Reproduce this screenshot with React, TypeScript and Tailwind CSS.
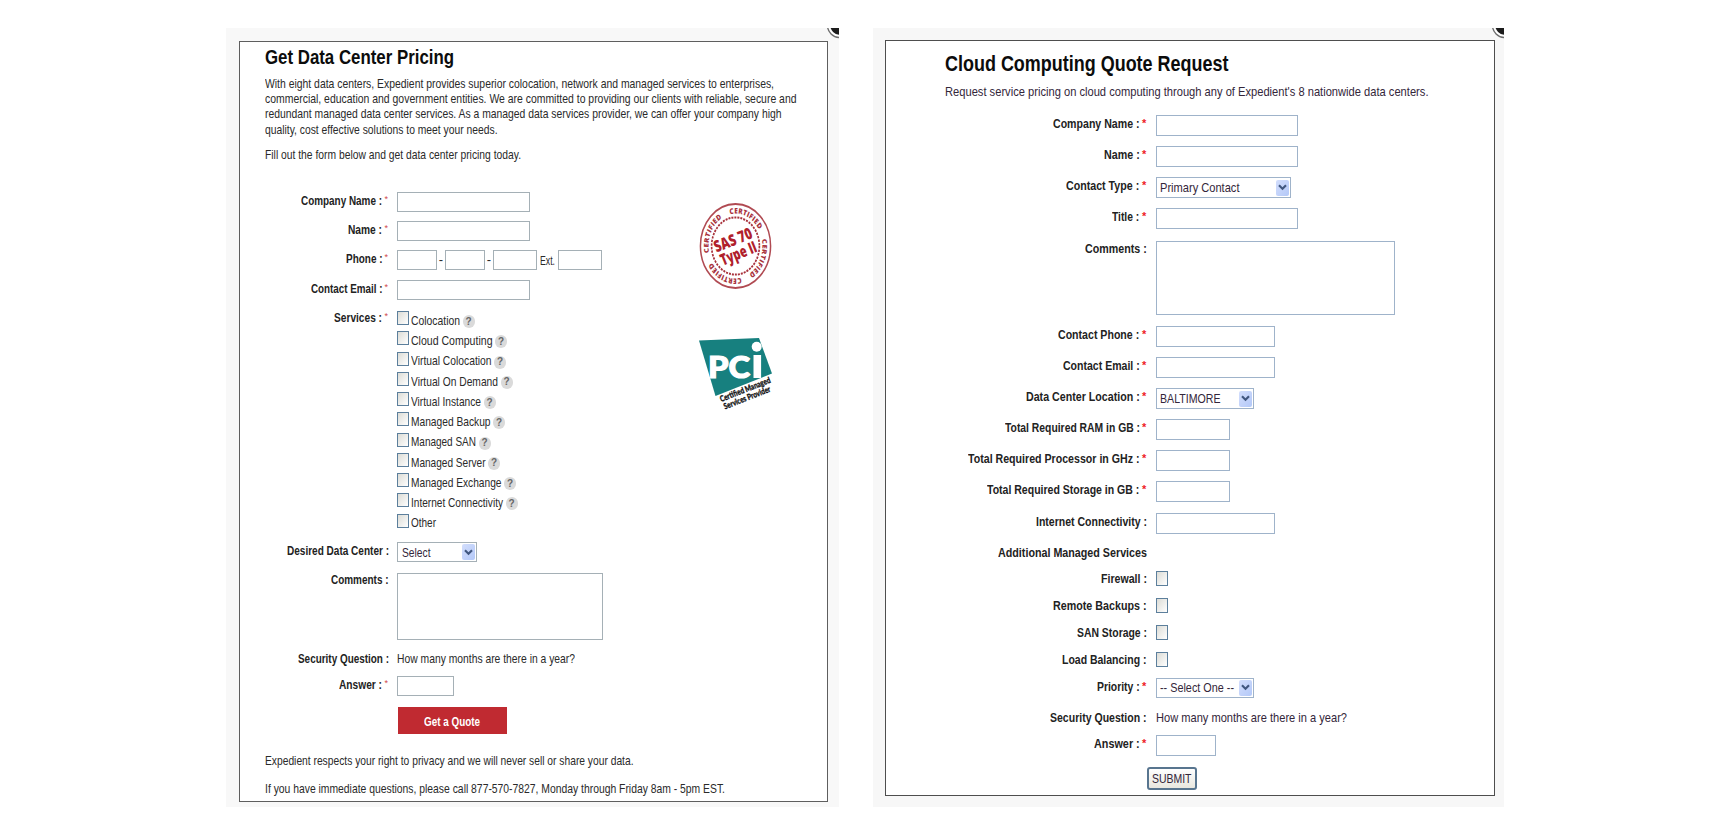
import { useLayoutEffect, useRef, type ReactNode } from "react";

/** One line of text, condensed or widened horizontally to an exact width. */
function Fit({ w, children, className = "" }: { w: number; children: ReactNode; className?: string }) {
  const ref = useRef<HTMLSpanElement>(null);
  useLayoutEffect(() => {
    const el = ref.current;
    if (!el) return;
    el.style.transform = "none";
    const natural = el.getBoundingClientRect().width;
    el.style.transform = `scaleX(${w / natural})`;
  }, [w, children]);
  return (
    <span className={`block shrink-0 whitespace-nowrap ${className}`} style={{ width: w }}>
      <span ref={ref} className="inline-block origin-left align-top">
        {children}
      </span>
    </span>
  );
}

type Theme = "left" | "right";

function Label({
  text,
  w,
  required,
  lowered = required,
  theme,
}: {
  text: string;
  w: number;
  required?: boolean;
  lowered?: boolean;
  theme: Theme;
}) {
  const left = theme === "left";
  return (
    <div
      className={`flex shrink-0 justify-end font-bold text-[#222] ${
        left ? "mr-[8.5px] w-[123.5px]" : "mr-[9.2px] w-[260.5px] pt-px"
      } ${left && lowered ? "pt-px" : ""}`}
    >
      <Fit w={w}>{text}</Fit>
      {required &&
        (left ? (
          <span className="w-[6.5px] pl-[2.5px] text-[9px] leading-[12px] font-normal text-[#d0474c]">*</span>
        ) : (
          <span className="w-[7px] pl-[2.5px] text-[11px] leading-[15px] text-[#ee1c25]">*</span>
        ))}
    </div>
  );
}

function Field({ className, theme }: { className: string; theme: Theme }) {
  return (
    <div
      className={`shrink-0 border bg-white ${theme === "left" ? "border-[#a5b0b6]" : "border-[#9fb3ca]"} ${className}`}
    />
  );
}

function Select({ text, w, className, theme }: { text: string; w: number; className: string; theme: Theme }) {
  return (
    <div
      className={`flex shrink-0 items-center justify-between border bg-white pr-px pl-[3.5px] text-[#33263a] ${
        theme === "left" ? "border-[#a5b0b6]" : "border-[#9fb3ca]"
      } ${className}`}
    >
      <Fit w={w} className="pt-px">
        {text}
      </Fit>
      <span className="flex h-[16px] w-[13px] items-center justify-center rounded-[2px] bg-linear-to-br from-[#d3defc] to-[#b3c8f8]">
        <svg width="9" height="7" viewBox="0 0 9 7" fill="none">
          <path d="M1 1.2 L4.5 4.8 L8 1.2" stroke="#41577f" strokeWidth="2.1" />
        </svg>
      </span>
    </div>
  );
}

function Checkbox({ className }: { className: string }) {
  return (
    <span
      className={`block w-[12px] shrink-0 border border-[#5c7f9c] bg-linear-to-br from-[#dcdcd6] to-white ${className}`}
    />
  );
}

function CloseCorner() {
  return (
    <svg className="absolute top-0 right-0" width="12" height="11" viewBox="0 0 12 11">
      <circle cx="13" cy="-3" r="12.6" fill="#fff" stroke="#6e6e6e" strokeWidth="1.4" />
      <circle cx="13" cy="-3" r="9.8" fill="#1c1c1c" />
    </svg>
  );
}

function Seal() {
  return (
    <svg width="74" height="88" viewBox="-37.5 -44 74 88" className="block">
      <g transform="scale(.835 1)" fill="#a8323c">
        <circle r="42" fill="none" stroke="#b04a52" strokeWidth="1.8" />
        <circle r="28.6" fill="none" stroke="#a8323c" strokeWidth="2" strokeDasharray="2.4 1.2" />
        <defs>
          <path id="ring" d="M0 -32.4 A32.4 32.4 0 1 1 -0.01 -32.4" />
        </defs>
        {[-12, 78, 168, 258].map((a) => (
          <text
            key={a}
            transform={`rotate(${a})`}
            fontFamily="Open Sans, sans-serif"
            fontWeight="800"
            fontSize="7.7"
            letterSpacing=".25"
          >
            <textPath href="#ring">CERTIFIED</textPath>
          </text>
        ))}
      </g>
      <g
        transform="rotate(-22)"
        fill="#b0202c"
        fontFamily="Open Sans, sans-serif"
        fontWeight="800"
        fontSize="16"
        textAnchor="middle"
      >
        <text x="0" y="-1" textLength="40" lengthAdjust="spacingAndGlyphs">
          SAS 70
        </text>
        <text x="0" y="13.5" textLength="38" lengthAdjust="spacingAndGlyphs">
          Type II
        </text>
      </g>
    </svg>
  );
}

function PciLogo() {
  return (
    <svg width="78" height="84" viewBox="0 0 78 84" className="block overflow-visible">
      <path d="M1 3.5 L61 1 L74 36.5 L17.5 59 Z" fill="#17807f" />
      <g fill="#fff" fontFamily="Lato, sans-serif" fontWeight="900">
        <text x="10" y="41" fontSize="31" textLength="42" lengthAdjust="spacingAndGlyphs" stroke="#fff" strokeWidth="1.2">
          PC
        </text>
      </g>
      <rect x="55.5" y="18" width="7.6" height="23" fill="#fff" />
      <circle cx="58.7" cy="9.7" r="5" fill="#fff" />
      <g fontFamily="Lato, sans-serif" fontWeight="900" fontSize="8.4" fill="#111" stroke="#111" strokeWidth=".3">
        <text transform="translate(23.3 65) rotate(-21.5)" textLength="53.5" lengthAdjust="spacingAndGlyphs">
          Certified Managed
        </text>
        <text transform="translate(27 72.5) rotate(-21.5)" textLength="49.5" lengthAdjust="spacingAndGlyphs">
          Services Provider
        </text>
      </g>
    </svg>
  );
}

const services: { name: string; w: number; help: boolean }[] = [
  { name: "Colocation", w: 49, help: true },
  { name: "Cloud Computing", w: 81.5, help: true },
  { name: "Virtual Colocation", w: 80.5, help: true },
  { name: "Virtual On Demand", w: 87, help: true },
  { name: "Virtual Instance", w: 70, help: true },
  { name: "Managed Backup", w: 79.5, help: true },
  { name: "Managed SAN", w: 65, help: true },
  { name: "Managed Server", w: 74.5, help: true },
  { name: "Managed Exchange", w: 90.5, help: true },
  { name: "Internet Connectivity", w: 92, help: true },
  { name: "Other", w: 25, help: false },
];

function PricingForm() {
  return (
    <section className="relative h-[779px] w-[613px] bg-[#f8f8f8] pt-[13px] pl-[13px]">
      <CloseCorner />
      <div className="h-[761px] w-[589px] border border-[#5e5e5e] bg-white pl-[25px] text-[13px] leading-[15px] text-[#2a2a2a]">
        <h1 className="pt-[4px] text-[20px] leading-[22px] font-bold text-[#0c0c0c]">
          <Fit w={189}>Get Data Center Pricing</Fit>
        </h1>
        <div className="pt-[7.6px] leading-[15.33px]">
          <Fit w={509}>With eight data centers, Expedient provides superior colocation, network and managed services to enterprises,</Fit>
          <Fit w={531.5}>commercial, education and government entities. We are committed to providing our clients with reliable, secure and</Fit>
          <Fit w={516.5}>redundant managed data center services. As a managed data services provider, we can offer your company high</Fit>
          <Fit w={232.5}>quality, cost effective solutions to meet your needs.</Fit>
        </div>
        <div className="pt-[10.1px]">
          <Fit w={256}>Fill out the form below and get data center pricing today.</Fit>
        </div>

        <div className="flex pt-[29.5px]">
          <div className="w-[433px]">
            <div className="flex h-[29.4px]">
              <Label theme="left" text="Company Name :" w={81} required />
              <Field theme="left" className="h-[20px] w-[133px]" />
            </div>
            <div className="flex h-[29.4px]">
              <Label theme="left" text="Name :" w={34} required />
              <Field theme="left" className="h-[20px] w-[133px]" />
            </div>
            <div className="flex h-[29.4px]">
              <Label theme="left" text="Phone :" w={36.5} required />
              <Field theme="left" className="h-[20px] w-[40px]" />
              <span className="w-[8px] pt-[2px] text-center">-</span>
              <Field theme="left" className="h-[20px] w-[40px]" />
              <span className="w-[8px] pt-[2px] text-center">-</span>
              <Field theme="left" className="h-[20px] w-[44px]" />
              <Fit w={15} className="mr-[3px] ml-[3px] pt-[3px]">
                Ext.
              </Fit>
              <Field theme="left" className="h-[20px] w-[44px]" />
            </div>
            <div className="flex h-[29.4px]">
              <Label theme="left" text="Contact Email :" w={71.5} required />
              <Field theme="left" className="h-[20px] w-[133px]" />
            </div>
            <div className="flex h-[233.4px]">
              <Label theme="left" text="Services :" w={48} required />
              <div className="pt-[2px]">
                {services.map((s) => (
                  <div key={s.name} className="flex h-[20.27px]">
                    <Checkbox className="mr-[1.5px] h-[14px]" />
                    <Fit w={s.w} className="pt-[1.7px]">
                      {s.name}
                    </Fit>
                    {s.help && (
                      <span className="mt-[4px] ml-[3px] flex h-[13px] w-[12px] items-center justify-center rounded-full bg-[#dadada] text-[10px] leading-[12px] font-bold text-[#666]">
                        ?
                      </span>
                    )}
                  </div>
                ))}
              </div>
            </div>
            <div className="flex h-[30px]">
              <Label theme="left" text="Desired Data Center :" w={102} lowered />
              <Select theme="left" text="Select" w={28.5} className="h-[20px] w-[80px]" />
            </div>
            <div className="flex h-[78.5px]">
              <Label theme="left" text="Comments :" w={57.5} />
              <Field theme="left" className="mt-px h-[67px] w-[206px]" />
            </div>
            <div className="flex h-[25.5px]">
              <Label theme="left" text="Security Question :" w={91} />
              <Fit w={178}>How many months are there in a year?</Fit>
            </div>
            <div className="flex h-[30.5px]">
              <Label theme="left" text="Answer :" w={43} required />
              <Field theme="left" className="h-[20px] w-[57px]" />
            </div>
            <button className="ml-[132.5px] flex h-[27.5px] w-[109.5px] items-center justify-center bg-[#c02a31] pt-px font-bold text-white">
              <Fit w={56}>Get a Quote</Fit>
            </button>
          </div>
          <div className="flex w-[78px] flex-col gap-[47px] pt-[10.5px]">
            <Seal />
            <PciLogo />
          </div>
        </div>

        <div className="pt-[18.4px]">
          <Fit w={368.5}>Expedient respects your right to privacy and we will never sell or share your data.</Fit>
        </div>
        <div className="pt-[13px]">
          <Fit w={460}>If you have immediate questions, please call 877-570-7827, Monday through Friday 8am - 5pm EST.</Fit>
        </div>
      </div>
    </section>
  );
}

function QuoteForm() {
  return (
    <section className="relative h-[779px] w-[631px] bg-[#f7f7f7] pt-[12px] pl-[12px]">
      <CloseCorner />
      <div className="h-[756px] w-[610px] border border-[#4e4e4e] bg-white text-[13.5px] leading-[16px] text-[#33263a]">
        <h1 className="pt-[11px] pl-[59px] text-[22px] leading-[24px] font-bold text-[#0c0c0c]">
          <Fit w={283.5}>Cloud Computing Quote Request</Fit>
        </h1>
        <div className="pt-[8.4px] pl-[59px]">
          <Fit w={483.5}>Request service pricing on cloud computing through any of Expedient&apos;s 8 nationwide data centers.</Fit>
        </div>

        <div className="pt-[14.8px]">
          <div className="flex h-[31.1px]">
            <Label theme="right" text="Company Name :" w={86.5} required />
            <Field theme="right" className="h-[21px] w-[142px]" />
          </div>
          <div className="flex h-[31.1px]">
            <Label theme="right" text="Name :" w={35.7} required />
            <Field theme="right" className="h-[21px] w-[142px]" />
          </div>
          <div className="flex h-[31.1px]">
            <Label theme="right" text="Contact Type :" w={73.2} required />
            <Select theme="right" text="Primary Contact" w={79.5} className="h-[21px] w-[135px]" />
          </div>
          <div className="flex h-[31.1px]">
            <Label theme="right" text="Title :" w={27.2} required />
            <Field theme="right" className="h-[21px] w-[142px]" />
          </div>
          <div className="flex h-[86.4px]">
            <Label theme="right" text="Comments :" w={61.7} />
            <Field theme="right" className="mt-px h-[74.5px] w-[239px]" />
          </div>
          <div className="flex h-[31.1px]">
            <Label theme="right" text="Contact Phone :" w={81.2} required />
            <Field theme="right" className="h-[21px] w-[119.5px]" />
          </div>
          <div className="flex h-[31.1px]">
            <Label theme="right" text="Contact Email :" w={76.7} required />
            <Field theme="right" className="h-[21px] w-[119.5px]" />
          </div>
          <div className="flex h-[31.1px]">
            <Label theme="right" text="Data Center Location :" w={113.7} required />
            <Select theme="right" text="BALTIMORE" w={60.5} className="h-[21px] w-[98.5px]" />
          </div>
          <div className="flex h-[31.1px]">
            <Label theme="right" text="Total Required RAM in GB :" w={135} required />
            <Field theme="right" className="h-[21px] w-[74px]" />
          </div>
          <div className="flex h-[31.1px]">
            <Label theme="right" text="Total Required Processor in GHz :" w={171.5} required />
            <Field theme="right" className="h-[21px] w-[74px]" />
          </div>
          <div className="flex h-[31.1px]">
            <Label theme="right" text="Total Required Storage in GB :" w={152.3} required />
            <Field theme="right" className="h-[21px] w-[74px]" />
          </div>
          <div className="flex h-[31.1px]">
            <Label theme="right" text="Internet Connectivity :" w={111} />
            <Field theme="right" className="h-[21px] w-[119.5px]" />
          </div>
          <div className="flex h-[26.8px]">
            <Label theme="right" text="Additional Managed Services" w={149} />
          </div>
          <div className="flex h-[26.8px]">
            <Label theme="right" text="Firewall :" w={46} />
            <Checkbox className="mt-[1px] h-[15px]" />
          </div>
          <div className="flex h-[26.8px]">
            <Label theme="right" text="Remote Backups :" w={93.5} />
            <Checkbox className="mt-[1px] h-[15px]" />
          </div>
          <div className="flex h-[26.8px]">
            <Label theme="right" text="SAN Storage :" w={70} />
            <Checkbox className="mt-[1px] h-[15px]" />
          </div>
          <div className="flex h-[26.8px]">
            <Label theme="right" text="Load Balancing :" w={84.5} />
            <Checkbox className="mt-[1px] h-[15px]" />
          </div>
          <div className="flex h-[31.1px]">
            <Label theme="right" text="Priority :" w={42.7} required />
            <Select theme="right" text="-- Select One --" w={74} className="h-[20.5px] w-[98.5px]" />
          </div>
          <div className="flex h-[26.8px]">
            <Label theme="right" text="Security Question :" w={96.5} />
            <Fit w={191} className="pt-px">
              How many months are there in a year?
            </Fit>
          </div>
          <div className="flex h-[32px]">
            <Label theme="right" text="Answer :" w={45.7} required />
            <Field theme="right" className="h-[21px] w-[60.5px]" />
          </div>
          <button className="ml-[261px] flex h-[23px] w-[49.5px] items-center justify-center rounded-[3px] border-2 border-[#58758f] bg-linear-to-b from-white to-[#e9e7df] text-[#33263a]">
            <Fit w={39.5}>SUBMIT</Fit>
          </button>
        </div>
      </div>
    </section>
  );
}

export default function App() {
  return (
    <main className="flex h-[835px] w-[1730px] items-start gap-[34px] overflow-hidden bg-white pt-[28px] pl-[226px] font-['Liberation_Sans',Arial,sans-serif]">
      <PricingForm />
      <QuoteForm />
    </main>
  );
}
